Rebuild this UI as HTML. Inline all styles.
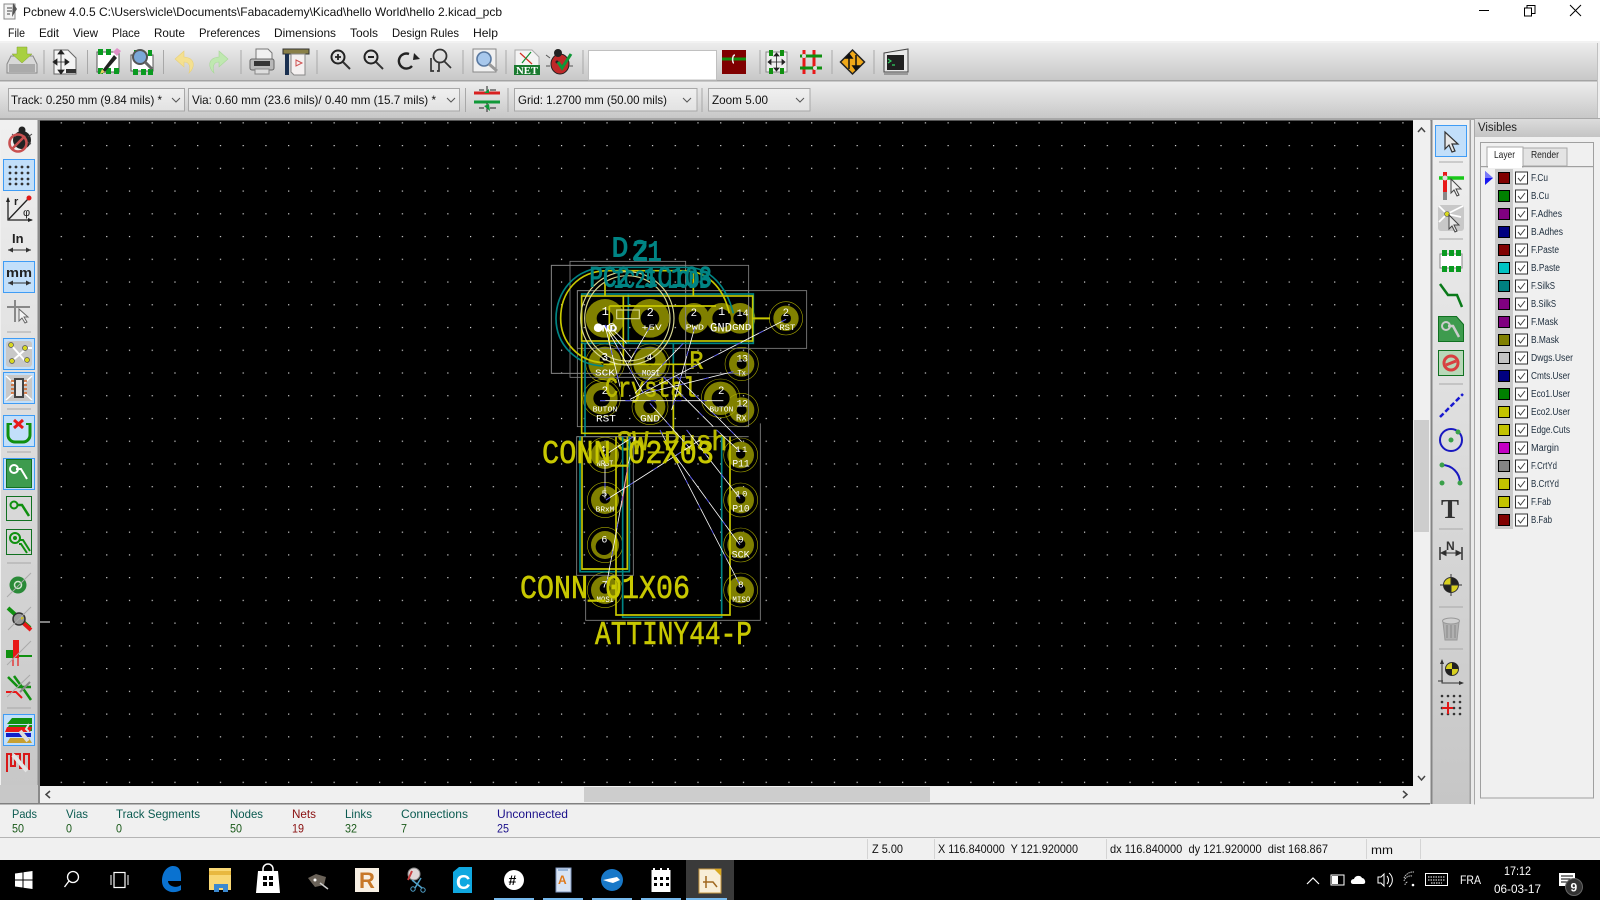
<!DOCTYPE html>
<html><head><meta charset="utf-8"><title>Pcbnew</title>
<style>
html,body{margin:0;padding:0;background:#f0f0f0;width:1600px;height:900px;overflow:hidden}
svg{display:block}
text{font-family:"Liberation Sans",sans-serif;font-size:12px;fill:#111}
.m text{font-size:12px}
.l{font-size:10px;fill:#1c2c3c;transform:translateY(-.5px)}
.pcb text{font-family:"Liberation Mono",monospace}
.tl text{stroke:#008484;stroke-width:3}
.yl text{stroke:#b8b800;stroke-width:2}
.big{font-size:33px;fill:#c8c800;stroke:#c8c800;stroke-width:.6}
.sep{stroke:#a8a8a8;stroke-width:1}
</style></head><body>
<svg width="1600" height="900" viewBox="0 0 1600 900" xmlns="http://www.w3.org/2000/svg">
<defs>
<linearGradient id="tb" x1="0" y1="0" x2="0" y2="1"><stop offset="0" stop-color="#ededed"/><stop offset="1" stop-color="#c8c8c8"/></linearGradient>
<linearGradient id="side" x1="0" y1="0" x2="0" y2="1"><stop offset="0" stop-color="#f0f0f0"/><stop offset="1" stop-color="#c6c6c6"/></linearGradient>
<linearGradient id="cap" x1="0" y1="0" x2="0" y2="1"><stop offset="0" stop-color="#dcdcdc"/><stop offset="1" stop-color="#c4c4c4"/></linearGradient>
<linearGradient id="combo" x1="0" y1="0" x2="0" y2="1"><stop offset="0" stop-color="#f0f0f0"/><stop offset="1" stop-color="#e2e2e2"/></linearGradient>
<pattern id="grid" width="22.74" height="22.74" patternUnits="userSpaceOnUse" patternTransform="translate(15.2 8.56)"><rect width="1.2" height="1.2" fill="#d8d8d8"/></pattern>
</defs>

<!-- window -->
<rect width="1600" height="900" fill="#f0f0f0"/>
<rect width="1600" height="41" fill="#fff"/>
<g>
<rect x="4" y="4" width="11" height="15" fill="#f4f4f4" stroke="#888"/><path d="M7 8h5M7 11h5M7 14h3" stroke="#444"/><path d="M13 3l4 6-5 8z" fill="#555"/>
</g>
<text x="23" y="16" textLength="479" lengthAdjust="spacingAndGlyphs">Pcbnew 4.0.5 C:\Users\vicle\Documents\Fabacademy\Kicad\hello World\hello 2.kicad_pcb</text>
<path d="M1479 10.5h10" stroke="#000"/>
<path d="M1524.5 8h7v8h-7zM1527 8V5.500h8v8h-3.500" fill="none" stroke="#000"/>
<path d="M1570 5l11 11M1581 5l-11 11" stroke="#000"/>

<g class="m">
<text x="8" y="37" textLength="17" lengthAdjust="spacingAndGlyphs">File</text>
<text x="39" y="37" textLength="20" lengthAdjust="spacingAndGlyphs">Edit</text>
<text x="73" y="37" textLength="25" lengthAdjust="spacingAndGlyphs">View</text>
<text x="112" y="37" textLength="28" lengthAdjust="spacingAndGlyphs">Place</text>
<text x="154" y="37" textLength="31" lengthAdjust="spacingAndGlyphs">Route</text>
<text x="199" y="37" textLength="61" lengthAdjust="spacingAndGlyphs">Preferences</text>
<text x="274" y="37" textLength="62" lengthAdjust="spacingAndGlyphs">Dimensions</text>
<text x="350" y="37" textLength="28" lengthAdjust="spacingAndGlyphs">Tools</text>
<text x="392" y="37" textLength="67" lengthAdjust="spacingAndGlyphs">Design Rules</text>
<text x="473" y="37" textLength="25" lengthAdjust="spacingAndGlyphs">Help</text>
</g>

<!-- toolbars -->
<rect y="41" width="1600" height="2" fill="#f2f2f2"/>
<rect y="43" width="1597" height="37" fill="url(#tb)"/>
<rect y="80" width="1597" height="1.500" fill="#a4a4a4"/>
<rect y="81.500" width="1597" height="36.500" fill="url(#tb)"/>
<rect y="118" width="1600" height="2.500" fill="#a8a8a8"/>
<rect x="1597" y="43" width="1" height="75" fill="#c0c0c0"/>
<g class="sep">
<path d="M44 50v24M87.500 50v24M163.500 50v24M241 50v24M317 50v24M463 50v24M506 50v24M583 50v24M760 50v24M832 50v24M874 50v24M465.500 88v24M508 88v24M702 88v24"/>
</g>

<!-- Toolbar 1 icons -->
<g>
<path d="M11 62h22l4 8v9H7v-9z" transform="translate(0 -6)" fill="#d8d8d8" stroke="#888"/><rect x="9" y="64" width="26" height="8" fill="#aaa"/><path d="M17 47h10v7h5l-10 9-10-9h5z" fill="#a8d040" stroke="#80a030" stroke-width=".5"/>
<path d="M54 50h14l8 8v16H54z" fill="#f4f4f4" stroke="#666"/><path d="M61 52v20M55 62h14M61 50l-3 4h6zM61 74l-3-4h6zM53 62l4-3v6zM69 62l-4-3v6z" fill="#222" stroke="#222" stroke-width=".8"/><path d="M66 69h10v4H66z" fill="#333"/>
<rect x="97" y="52" width="22" height="20" fill="#fff" stroke="#555"/><path d="M98 49h5v6h-5zM106 49h5v6h-5zM98 68h5v6h-5zM106 68h5v6h-5zM114 68h5v6h-5z" fill="#0a9a20"/><path d="M101 72l13-17 3 3-13 15z" fill="#222"/><path d="M113 52l4-4 4 3-4 5z" fill="#e090c8"/><path d="M100 74l2-5 3 3z" fill="#e8d060"/>
<rect x="131" y="55" width="22" height="16" fill="#fff" stroke="#555"/><path d="M133 69h5v6h-5zM141 69h5v6h-5zM148 69h5v6h-5zM134 50h4v6h-4zM148 50h4v6h-4z" fill="#0a9a20"/><circle cx="140" cy="57" r="7" fill="#7aa8d8" stroke="#555" stroke-width="2"/><path d="M145 62l7 7" stroke="#666" stroke-width="3"/>
<path d="M184 51l-9 8 9 8v-5c5 0 7 4 5 11 6-5 7-15-5-16z" fill="#f4e090" stroke="#e8d078" stroke-width=".6"/>
<path d="M219 51l9 8-9 8v-5c-5 0-7 4-5 11-6-5-7-15 5-16z" fill="#bfe8b0" stroke="#a8d898" stroke-width=".6"/>
<path d="M256 49h12l4 4v7h-16z" fill="#f0f0f0" stroke="#777"/><rect x="250" y="59" width="24" height="11" rx="2" fill="#b8b8b8" stroke="#666"/><rect x="254" y="61" width="16" height="5" fill="#333"/><rect x="255" y="69" width="14" height="5" fill="#ddd" stroke="#888"/>
<path d="M283 49h26v5h-26z" fill="#8a8048" stroke="#333"/><path d="M285 54h4v21h-4z" fill="#1a3050"/><path d="M291 54h14v21h-11l-3-3z" fill="#f4f0f0" stroke="#888"/><path d="M296 60l6 3-6 3z" fill="none" stroke="#d05050"/>
<circle cx="338" cy="57" r="6.500" fill="none" stroke="#222" stroke-width="2"/><path d="M335 57h6M338 54v6" stroke="#222" stroke-width="1.800"/><path d="M343 62l7 7" stroke="#333" stroke-width="2"/>
<circle cx="371" cy="57" r="6.500" fill="none" stroke="#222" stroke-width="2"/><path d="M368 57h6" stroke="#222" stroke-width="2"/><path d="M376 62l7 7" stroke="#333" stroke-width="2"/>
<path d="M412 66a7.500 7.500 0 1 1 -3 -12" fill="none" stroke="#222" stroke-width="2.400"/><path d="M407 53l6 6-7 1z" fill="#222" transform="translate(7 0)"/>
<circle cx="440" cy="56" r="6.500" fill="none" stroke="#333" stroke-width="1.800"/><path d="M444 61l7 7M431 58v13h3M439 62v9h-2" stroke="#333" stroke-width="1.700" fill="none"/>
<rect x="473" y="49" width="23" height="23" fill="#f0f0f0" stroke="#888"/><circle cx="484" cy="59" r="7" fill="#a8c8ec" stroke="#5878a0" stroke-width="1.600"/><path d="M489 64l8 7" stroke="#999" stroke-width="3"/>
<path d="M515 50h17l7 7v15h-24z" fill="#f4f4f4" stroke="#aaa"/><path d="M520 53l12 11" stroke="#d03020" stroke-width="1.200"/><path d="M531 52l-9 11" stroke="#109030" stroke-width="1.200"/><rect x="514" y="65" width="26" height="10" fill="#1a7a30"/><text x="516" y="74" textLength="22" lengthAdjust="spacingAndGlyphs" style="font-size:10px;font-weight:bold;fill:#fff;font-family:'Liberation Serif',serif">NET</text>
<ellipse cx="560" cy="64" rx="9" ry="10" fill="#c02828" stroke="#222"/><circle cx="558" cy="53" r="4" fill="#222"/><circle cx="557" cy="62" r="1.500" fill="#222"/><circle cx="563" cy="66" r="1.500" fill="#222"/><path d="M550 58l-4-3M550 66h-4M569 66h4" stroke="#555"/><path d="M558 62l4 6 9-14" fill="none" stroke="#109838" stroke-width="3"/>
<rect x="588.500" y="50.500" width="128" height="29.500" fill="#fff" stroke="#c0c0c0"/>
<rect x="722" y="50" width="24" height="24" fill="#800000"/><path d="M722 59h24" stroke="#109010" stroke-width="3"/><path d="M735 55c-3 0-3 8-1 8" stroke="#eee" fill="none" stroke-width="1.500"/>
<rect x="766" y="52" width="21" height="20" fill="#eee" stroke="#888"/><path d="M769 50h4v6h-4zM780 50h4v6h-4zM769 68h4v6h-4zM780 68h4v6h-4z" fill="#109010"/><path d="M768 62h17M776.500 53v18M768 62l3-2.500v5zM785 62l-3-2.500v5zM776.500 53l-2.500 3h5zM776.500 71l-2.500-3h5z" stroke="#222" fill="#222" stroke-width=".8"/>
<path d="M804 50v24M814 50v24" stroke="#e81818" stroke-width="3"/><path d="M800 56h22M800 68h22" stroke="#109010" stroke-width="3"/><circle cx="804" cy="56" r="2" fill="#ddd"/><circle cx="815" cy="68" r="2" fill="#ddd"/>
<path d="M852.500 50l12 12-12 12-12-12z" fill="#f0a818" stroke="#222" stroke-width="1.500"/><path d="M849 55v14M856 69V55M849 54l-3 4h6zM856 70l-3-4h6z" stroke="#111" fill="#111" stroke-width="1.500"/>
<path d="M884 53l24-4v23h-24z" fill="#e8e8e8" stroke="#444"/><rect x="887" y="55" width="17" height="15" fill="#202020"/><path d="M888 59l3 2-3 2M892 65h3" stroke="#30d060" fill="none" stroke-width="1.200"/><path d="M884 74h24" stroke="#888" stroke-width="1.500"/>
</g>

<!-- Toolbar 2 -->
<g>
<rect x="8.500" y="88.500" width="176" height="22.500" fill="url(#combo)" stroke="#a8a8a8"/>
<text x="11" y="104" textLength="151" lengthAdjust="spacingAndGlyphs">Track: 0.250 mm (9.84 mils) *</text>
<path d="M172 98l4 4 4-4" fill="none" stroke="#555"/>
<rect x="188.500" y="88.500" width="271" height="22.500" fill="url(#combo)" stroke="#a8a8a8"/>
<text x="192" y="104" textLength="244" lengthAdjust="spacingAndGlyphs">Via: 0.60 mm (23.6 mils)/ 0.40 mm (15.7 mils) *</text>
<path d="M447 98l4 4 4-4" fill="none" stroke="#555"/>
<path d="M474 93h26" stroke="#d82020" stroke-width="3"/><path d="M474 102h26" stroke="#109838" stroke-width="3"/><path d="M487 86v6M487 103v9M479 90h5M490 90h6M479 108h5M490 108h6" stroke="#222"/><path d="M484 93l5-4v4zM484 106l6 5-1-7z" fill="#109838"/>
<rect x="514.500" y="88.500" width="182.500" height="22.500" fill="url(#combo)" stroke="#a8a8a8"/>
<text x="518" y="104" textLength="149" lengthAdjust="spacingAndGlyphs">Grid: 1.2700 mm (50.00 mils)</text>
<path d="M683 98l4 4 4-4" fill="none" stroke="#555"/>
<rect x="708.500" y="88.500" width="101.500" height="22.500" fill="url(#combo)" stroke="#a8a8a8"/>
<text x="712" y="104" textLength="56" lengthAdjust="spacingAndGlyphs">Zoom 5.00</text>
<path d="M796 98l4 4 4-4" fill="none" stroke="#555"/>
</g>

<!-- Canvas -->
<rect x="40" y="120.500" width="1373" height="665.500" fill="#000"/>
<rect x="40" y="120.500" width="1373" height="665.500" fill="url(#grid)"/>
<path d="M40 622h10" stroke="#fff"/>

<!-- PCB top -->
<g class="pcb" transform="translate(520 230) scale(.33333)">
<g fill="#808000">
<circle cx="255" cy="400" r="50"/><circle cx="390" cy="400" r="50"/>
<circle cx="255" cy="265" r="58"/><circle cx="390" cy="265" r="58"/>
<circle cx="522" cy="265" r="46"/><circle cx="605" cy="265" r="46"/><circle cx="660" cy="265" r="46"/>
<circle cx="798" cy="265" r="38"/>
<circle cx="665" cy="402" r="38"/><circle cx="665" cy="540" r="38"/>
<circle cx="245" cy="505" r="48"/><circle cx="390" cy="530" r="46"/><circle cx="602" cy="505" r="50"/>
</g>
<g fill="none" stroke="#a8a800" stroke-width="1.800">
<circle cx="798" cy="265" r="50"/><circle cx="665" cy="402" r="50"/><circle cx="665" cy="540" r="50"/>
<circle cx="255" cy="400" r="58"/><circle cx="390" cy="400" r="58"/><circle cx="245" cy="505" r="56"/><circle cx="390" cy="530" r="54"/><circle cx="602" cy="505" r="58"/>
</g>
<g fill="#000">
<circle cx="255" cy="265" r="25"/><circle cx="390" cy="265" r="28"/><circle cx="522" cy="265" r="22"/><circle cx="605" cy="265" r="28"/><circle cx="660" cy="265" r="20"/><circle cx="798" cy="265" r="15"/>
<circle cx="255" cy="390" r="16"/><circle cx="390" cy="390" r="16"/><circle cx="665" cy="402" r="15"/><circle cx="665" cy="540" r="15"/>
<circle cx="245" cy="505" r="25"/><circle cx="390" cy="530" r="20"/><circle cx="602" cy="505" r="27"/>
</g>
<g fill="none" stroke="#848484" stroke-width="2.500">
<rect x="94" y="106" width="403" height="324"/>
<rect x="150" y="94" width="347" height="348"/>
<rect x="94" y="106" width="592" height="324"/>
<rect x="172" y="182" width="514" height="408"/>
<rect x="172" y="182" width="688" height="173"/>
<path d="M170 620h516"/>
</g>
<g fill="none" stroke="#008484" stroke-width="5">
<path d="M640 250C620 170 570 112 500 112H265C160 112 108 190 108 265C108 345 170 405 250 408"/>
<rect x="185" y="192" width="515" height="148"/>
<path d="M195 340V620M460 340V610M325 190V340"/>
</g>
<g fill="none" stroke="#c8c800" stroke-width="5">
<path d="M628 250C610 170 560 122 490 122H265C170 122 122 190 122 265C122 335 175 395 250 398"/>
<rect x="185" y="198" width="513" height="135"/>
<path d="M268 228H588M268 228V340"/>
<path d="M185 340V610H460V403"/>
<path d="M250 403H530M255 130V198M520 130V198M310 198V403"/>
<path d="M698 265H750" stroke-width="6"/>
</g>
<g fill="none" stroke="#d8d890" stroke-width="3.500">
<circle cx="322" cy="265" r="140"/><circle cx="322" cy="265" r="128"/>
<rect x="290" y="240" width="68" height="26"/>
</g>
<g class="tl">
<text x="275" y="80" textLength="50" lengthAdjust="spacingAndGlyphs" style="font-size:86px;fill:#008484">D</text>
<text x="335" y="88" textLength="50" lengthAdjust="spacingAndGlyphs" style="font-size:86px;fill:#008484">2</text>
<text x="340" y="92" textLength="85" lengthAdjust="spacingAndGlyphs" style="font-size:86px;fill:#008484">Z1</text>
<text x="208" y="170" textLength="368" lengthAdjust="spacingAndGlyphs" style="font-size:88px;fill:#008484">PC2 1C103</text>
<text x="280" y="172" textLength="290" lengthAdjust="spacingAndGlyphs" style="font-size:76px;fill:#008484">IC25 LCDB</text>
</g>
<g class="yl">
<text x="255" y="500" textLength="275" lengthAdjust="spacingAndGlyphs" style="font-size:84px;fill:#b8b800">Crystal</text>
<text x="508" y="415" textLength="42" lengthAdjust="spacingAndGlyphs" style="font-size:78px;fill:#b8b800">R</text>
<text x="290" y="660" textLength="332" lengthAdjust="spacingAndGlyphs" style="font-size:84px;fill:#b8b800">SW_Push</text>
</g>
<!-- ratsnest -->
<g fill="none">
<path id="r1" d="M798 268L330 508M255 285L335 385M255 285L300 470M255 285L370 490M270 290L320 340M390 290L325 400M525 290L455 540M490 340L345 490M640 425L375 490M240 512H610M390 520L510 655M430 440L580 590M470 440L690 660" stroke="#fff" stroke-width="2.400"/>
<path d="M798 268L330 508M255 285L335 385M255 285L300 470M255 285L370 490M270 290L320 340M390 290L325 400M525 290L455 540M490 340L345 490M640 425L375 490M240 512H610M390 520L510 655M430 440L580 590M470 440L690 660" stroke="#4848f0" stroke-width="2.400" stroke-dasharray="16 60"/>
</g>
<circle cx="235" cy="293" r="13" fill="#fff"/><circle cx="275" cy="292" r="11" fill="none" stroke="#fff" stroke-width="3"/>
<!-- pad text -->
<g>
<text x="245" y="255" style="font-size:36px;fill:#fff">1</text><text x="380" y="258" style="font-size:36px;fill:#fff">2</text><text x="512" y="258" style="font-size:32px;fill:#fff">2</text><text x="594" y="255" style="font-size:36px;fill:#fff">1</text>
<text x="650" y="258" textLength="36" style="font-size:30px;fill:#fff">14</text><text x="788" y="258" style="font-size:32px;fill:#fff">2</text>
<text x="220" y="305" textLength="72" lengthAdjust="spacingAndGlyphs" style="font-size:30px;fill:#fff;font-weight:bold">GND</text>
<text x="365" y="300" textLength="60" lengthAdjust="spacingAndGlyphs" style="font-size:26px;fill:#fff">+5V</text>
<text x="497" y="298" textLength="55" lengthAdjust="spacingAndGlyphs" style="font-size:22px;fill:#fff">PWD</text>
<text x="570" y="305" textLength="66" lengthAdjust="spacingAndGlyphs" style="font-size:38px;fill:#fff">GND</text>
<text x="636" y="300" textLength="58" lengthAdjust="spacingAndGlyphs" style="font-size:28px;fill:#fff">GND</text>
<text x="778" y="300" textLength="48" lengthAdjust="spacingAndGlyphs" style="font-size:26px;fill:#fff">RST</text>
<text x="245" y="392" style="font-size:32px;fill:#fff">3</text><text x="380" y="390" style="font-size:28px;fill:#fff">4</text>
<text x="225" y="437" textLength="60" lengthAdjust="spacingAndGlyphs" style="font-size:28px;fill:#fff">SCK</text>
<text x="366" y="437" textLength="54" lengthAdjust="spacingAndGlyphs" style="font-size:24px;fill:#fff">MOSI</text>
<text x="650" y="395" textLength="34" style="font-size:30px;fill:#fff">13</text><text x="652" y="436" textLength="26" lengthAdjust="spacingAndGlyphs" style="font-size:26px;fill:#fff">Tx</text>
<text x="245" y="492" style="font-size:32px;fill:#fff">2</text><text x="594" y="492" style="font-size:32px;fill:#fff">2</text>
<text x="218" y="544" textLength="74" lengthAdjust="spacingAndGlyphs" style="font-size:22px;fill:#fff">BUTON</text>
<text x="568" y="544" textLength="72" lengthAdjust="spacingAndGlyphs" style="font-size:22px;fill:#fff">BUTON</text>
<text x="228" y="574" textLength="60" lengthAdjust="spacingAndGlyphs" style="font-size:30px;fill:#fff">RST</text>
<text x="360" y="574" textLength="60" lengthAdjust="spacingAndGlyphs" style="font-size:30px;fill:#fff">GND</text>
<text x="650" y="530" textLength="34" style="font-size:30px;fill:#fff">12</text><text x="648" y="572" textLength="32" lengthAdjust="spacingAndGlyphs" style="font-size:28px;fill:#fff">Rx</text>
<text x="245" y="648" style="font-size:26px;fill:#fff">4</text><text x="650" y="660" textLength="34" style="font-size:26px;fill:#fff">11</text>
</g>
</g>

<!-- PCB lower -->
<g class="pcb" transform="translate(500 430) scale(.33333)">
<g fill="#808000">
<circle cx="315" cy="75" r="42"/><circle cx="315" cy="210" r="42"/><circle cx="315" cy="345" r="42"/><circle cx="315" cy="480" r="42"/>
<circle cx="722" cy="75" r="40"/><circle cx="722" cy="210" r="40"/><circle cx="722" cy="345" r="40"/><circle cx="722" cy="480" r="40"/>
</g>
<g fill="none" stroke="#a8a800" stroke-width="1.800">
<circle cx="315" cy="75" r="53"/><circle cx="315" cy="210" r="53"/><circle cx="315" cy="345" r="53"/><circle cx="315" cy="480" r="53"/>
<circle cx="722" cy="75" r="51"/><circle cx="722" cy="210" r="51"/><circle cx="722" cy="345" r="51"/><circle cx="722" cy="480" r="51"/>
</g>
<g fill="#000">
<circle cx="315" cy="70" r="16"/><circle cx="315" cy="205" r="16"/><circle cx="312" cy="350" r="25"/><circle cx="315" cy="475" r="16"/>
<circle cx="722" cy="72" r="14"/><circle cx="722" cy="207" r="14"/><circle cx="722" cy="342" r="14"/><circle cx="722" cy="477" r="14"/>
</g>
<g fill="none" stroke="#848484" stroke-width="2.500">
<path d="M230 20V436H400V20z"/>
<path d="M257 436V571H781V-20"/>
</g>
<g fill="none" stroke="#008484" stroke-width="5">
<path d="M240 20V425H388V20"/>
<path d="M368 20V562H665V20"/>
</g>
<g fill="none" stroke="#c8c800" stroke-width="5">
<path d="M246 20V417H382V20"/>
<path d="M348 20V555H690V20"/>
</g>
<g fill="none">
<path d="M315 75V205M315 75L400 20M318 210L600 30M320 460L350 300L385 100L405 20M650 0L720 65M480 0L720 465M520 70L720 345M560 0L720 205" stroke="#fff" stroke-width="2.400"/>
<path d="M315 75V205M315 75L400 20M318 210L600 30M320 460L350 300L385 100L405 20M650 0L720 65M480 0L720 465M520 70L720 345M560 0L720 205" stroke="#4848f0" stroke-width="2.400" stroke-dasharray="14 70"/>
<path d="M385 100L365 230" stroke="#e07070" stroke-width="2.400"/>
</g>
<g>
<text x="300" y="66" textLength="26" style="font-size:28px;fill:#fff">4</text>
<text x="290" y="108" textLength="50" lengthAdjust="spacingAndGlyphs" style="font-size:24px;fill:#fff">NRST</text>
<text x="305" y="200" style="font-size:28px;fill:#fff">5</text>
<text x="287" y="244" textLength="56" lengthAdjust="spacingAndGlyphs" style="font-size:22px;fill:#fff">BRxM</text>
<text x="304" y="338" style="font-size:30px;fill:#fff">6</text>
<text x="305" y="472" style="font-size:30px;fill:#fff">7</text>
<text x="290" y="516" textLength="52" lengthAdjust="spacingAndGlyphs" style="font-size:24px;fill:#fff">MOSI</text>
<text x="706" y="66" textLength="36" style="font-size:26px;fill:#fff">11</text>
<text x="697" y="110" textLength="52" lengthAdjust="spacingAndGlyphs" style="font-size:30px;fill:#fff">P11</text>
<text x="706" y="200" textLength="36" style="font-size:26px;fill:#fff">10</text>
<text x="697" y="245" textLength="52" lengthAdjust="spacingAndGlyphs" style="font-size:30px;fill:#fff">P10</text>
<text x="714" y="338" style="font-size:28px;fill:#fff">9</text>
<text x="695" y="383" textLength="54" lengthAdjust="spacingAndGlyphs" style="font-size:30px;fill:#fff">SCK</text>
<text x="714" y="472" style="font-size:28px;fill:#fff">8</text>
<text x="697" y="516" textLength="54" lengthAdjust="spacingAndGlyphs" style="font-size:24px;fill:#fff">MISO</text>
</g>
</g>

<!-- big yellow refs -->
<g class="pcb">
<text class="big" x="542" y="463" textLength="172" lengthAdjust="spacingAndGlyphs">CONN_02X03</text>
<text class="big" x="520" y="598" textLength="170" lengthAdjust="spacingAndGlyphs">CONN_01X06</text>
<text class="big" x="595" y="644" textLength="157" lengthAdjust="spacingAndGlyphs">ATTINY44-P</text>
</g>

<!-- Left toolbar -->
<rect x="0" y="120" width="2" height="668" fill="#f0f0f0"/>
<rect x="1" y="120" width="37" height="683" fill="url(#side)"/>
<rect x="37.500" y="120" width="2.500" height="683" fill="#8a8a8a"/>
<g fill="#c2dffa" stroke="#3f9cf5" stroke-width="1">
<rect x="3.500" y="159.500" width="31" height="31"/>
<rect x="3.500" y="261.500" width="31" height="31"/>
<rect x="3.500" y="338.500" width="31" height="31"/>
<rect x="3.500" y="372.500" width="31" height="31"/>
<rect x="3.500" y="415.500" width="31" height="31"/>
<rect x="3.500" y="458.500" width="31" height="31"/>
<rect x="3.500" y="714.500" width="31" height="31"/>
</g>
<g class="sep"><path d="M7 332h24M7 409h24M7 452h24M7 563h24M7 708h24M7 786h24"/></g>
<g>
<ellipse cx="22" cy="140" rx="9" ry="9" fill="#222"/><circle cx="22" cy="130" r="3.500" fill="#222"/><path d="M12 134l4 3M32 134l-4 3M31 144l-4-2" stroke="#444"/>
<circle cx="18" cy="143" r="8.500" fill="none" stroke="#c85050" stroke-width="2.600"/><path d="M12 149l13-13" stroke="#c85050" stroke-width="2.600"/>
<g fill="#333"><circle cx="10" cy="167" r="1.400"/><circle cx="16" cy="167" r="1.400"/><circle cx="22" cy="167" r="1.400"/><circle cx="28" cy="167" r="1.400"/><circle cx="10" cy="173" r="1.400"/><circle cx="16" cy="173" r="1.400"/><circle cx="22" cy="173" r="1.400"/><circle cx="28" cy="173" r="1.400"/><circle cx="10" cy="179" r="1.400"/><circle cx="16" cy="179" r="1.400"/><circle cx="22" cy="179" r="1.400"/><circle cx="28" cy="179" r="1.400"/><circle cx="10" cy="184" r="1.400"/><circle cx="16" cy="184" r="1.400"/><circle cx="22" cy="184" r="1.400"/><circle cx="28" cy="184" r="1.400"/></g>
<path d="M8 198v22h24M9 219l19-20" fill="none" stroke="#222" stroke-width="1.300"/><path d="M8 197l-2 5h4zM33 220l-5-2v4z" fill="#222"/><circle cx="29" cy="198" r="2.500" fill="#e01818"/><text x="14" y="205" style="font-size:11px;font-weight:bold;fill:#222">r</text><text x="23" y="216" style="font-size:11px;fill:#222">φ</text>
<text x="12" y="243" style="font-size:13px;font-weight:bold;fill:#222">In</text><path d="M8 250h23" stroke="#333"/><path d="M8 250l5-2.500v5zM31 250l-5-2.500v5z" fill="#333"/>
<text x="6" y="277" textLength="26" lengthAdjust="spacingAndGlyphs" style="font-size:13px;font-weight:bold;fill:#222">mm</text><path d="M8 283h23" stroke="#333"/><path d="M8 283l5-2.500v5zM31 283l-5-2.500v5z" fill="#333"/>
<path d="M15 300v22M7 307h23" stroke="#888" stroke-width="2"/><path d="M19 309v12l3-3 3 5 2-1-3-5h4z" fill="#f4f4f4" stroke="#666"/>
<rect x="6" y="341" width="26" height="26" rx="3" fill="#c8c8c8"/><path d="M11 345L27 363M27 348L12 361M28 348H32" stroke="#fff" stroke-width="2"/><g fill="#d8d820" stroke="#555" stroke-width=".7"><circle cx="11" cy="345" r="2.500"/><circle cx="25" cy="348" r="2.500"/><circle cx="12" cy="361" r="2.500"/><circle cx="27" cy="360" r="2.500"/></g>
<rect x="6" y="375" width="26" height="26" fill="#c8c8c8"/><path d="M6 376l26 24M32 376l-26 24" stroke="#fff" stroke-width="1.500"/><rect x="14" y="378" width="10" height="20" fill="#444"/><rect x="16" y="380" width="6" height="16" fill="#e8e8e8"/><path d="M11 381h3M11 385h3M11 389h3M11 393h3M24 381h3M24 385h3M24 389h3M24 393h3" stroke="#d06020" stroke-width="1.600"/>
<path d="M8 423v12a7 7 0 0 0 7 7h8a7 7 0 0 0 7-7v-12" fill="none" stroke="#109010" stroke-width="3"/><path d="M7 424h5M26 424h5" stroke="#109010" stroke-width="2"/><path d="M14 420l9 8M23 420l-9 8" stroke="#e81818" stroke-width="3"/>
<rect x="6.500" y="459.500" width="25" height="28" fill="#3e9b4e" stroke="#107020"/><circle cx="14" cy="469" r="4" fill="none" stroke="#fff" stroke-width="2"/><path d="M16 469h5l6 10" fill="none" stroke="#fff" stroke-width="2"/>
<rect x="6.500" y="496.500" width="25" height="24" fill="none" stroke="#107020"/><circle cx="14" cy="505" r="3.500" fill="none" stroke="#109010" stroke-width="2"/><path d="M17 505h5l7 11" fill="none" stroke="#109010" stroke-width="2.500"/>
<rect x="6.500" y="529.500" width="25" height="25" fill="none" stroke="#107020"/><circle cx="15" cy="538" r="5" fill="none" stroke="#109010" stroke-width="2"/><circle cx="15" cy="538" r="2" fill="#109010"/><path d="M19 540h4l7 11M19 544h2l6 9" fill="none" stroke="#109010" stroke-width="2"/>
<circle cx="18" cy="585" r="8.500" fill="#2a8a38"/><circle cx="18" cy="585" r="3.500" fill="none" stroke="#d0e8d0" stroke-width="1.500"/><path d="M7 597L31 573" stroke="#aaa"/>
<path d="M8 608L30 628" stroke="#109010" stroke-width="4"/><path d="M20 620L31 630" stroke="#e81818" stroke-width="4"/><circle cx="19" cy="619" r="6" fill="#999" stroke="#333" stroke-width="1.500"/><path d="M21 616l3 2-3 2" fill="#d0c020"/><path d="M8 630L31 607" stroke="#aaa"/>
<path d="M6 656h26" stroke="#109010" stroke-width="2"/><path d="M13 640h6v18h-6z" fill="#e81818"/><path d="M6 650h7v8H6z" fill="#109010"/><path d="M13 658v8M18 658v8" stroke="#e81818" stroke-width="1.200"/><path d="M7 665L31 641" stroke="#aaa"/>
<path d="M8 677l10 10 13 0M14 676l8 11 9 13" fill="none" stroke="#109010" stroke-width="2.500"/><path d="M6 692h10l6 6" fill="none" stroke="#e81818" stroke-width="2"/><path d="M20 692l10-10" stroke="#888" stroke-width="2"/><path d="M7 697L30 675" stroke="#aaa"/>
<path d="M7 724l5-6h20v6zM6 731l3-6h23v6z" fill="#109010"/><path d="M7 727h25l-2 5H5z" fill="#e81818"/><path d="M6 733h25v4H6z" fill="#1020c8"/><path d="M10 738h19l3 5H7z" fill="#c8a030"/><path d="M20 731l8 10" stroke="#ddd" stroke-width="4"/><path d="M29 724l-3 5 3 3" stroke="#ddd" stroke-width="2" fill="none"/>
<path d="M7 772V754h4v12h4V754h5v14h4V754h5v16" fill="none" stroke="#d81818" stroke-width="2"/><path d="M13 755l14 16" stroke="#e4e4e4" stroke-width="4"/>
</g>

<!-- Scrollbars -->
<rect x="1413" y="120" width="17" height="683" fill="#f0f0f0"/>
<rect x="1414" y="420" width="15" height="112" fill="#cdcdcd"/>
<path d="M1418 132l3.500-4 3.500 4" fill="none" stroke="#444" stroke-width="1.500"/>
<path d="M1418 776l3.500 4 3.500-4" fill="none" stroke="#444" stroke-width="1.500"/>
<rect x="40" y="786" width="1373" height="17" fill="#f0f0f0"/>
<rect x="584" y="787" width="346" height="15" fill="#cdcdcd"/>
<path d="M50 791l-4 3.500 4 3.500" fill="none" stroke="#444" stroke-width="1.500"/>
<path d="M1403 791l4 3.500-4 3.500" fill="none" stroke="#444" stroke-width="1.500"/>
<rect x="0" y="803" width="1430" height="1.500" fill="#808080"/>
<rect x="0" y="785" width="38" height="18" fill="#c8c8c8"/>

<!-- Right toolbar -->
<rect x="1430.500" y="120" width="2" height="684" fill="#858585"/>
<rect x="1432.500" y="120" width="37" height="684" fill="url(#side)"/>
<rect x="1469.500" y="120" width="1.500" height="684" fill="#a0a0a0"/>
<rect x="1471" y="120" width="129" height="684" fill="#eaeaea"/>
<rect x="1435.500" y="125.500" width="31" height="31" fill="#c2dffa" stroke="#3f9cf5"/>
<g class="sep"><path d="M1439 162h24M1439 239h24M1439 384h24M1439 529h24M1439 607h24M1439 649h24"/></g>
<g>
<path d="M1445 132v17l4-4 3 7 3-1-3-7h6z" fill="#e8e8e8" stroke="#333" stroke-width="1.200"/>
<path d="M1445 172v21" stroke="#e81818" stroke-width="4"/><path d="M1439 178h25" stroke="#18c818" stroke-width="3.500"/><path d="M1445 192v8" stroke="#888" stroke-width="4"/><circle cx="1445" cy="178" r="2.500" fill="#ddd"/><path d="M1451 179v14l3-3 3 6 2-1-3-6h5z" fill="#f0f0f0" stroke="#444"/>
<rect x="1438" y="205" width="26" height="26" rx="3" fill="#c8c8c8"/><path d="M1447 214l16-8M1447 214l14 3M1447 214l-8-8M1447 214l-8 8" stroke="#fff" stroke-width="1.800"/><circle cx="1447" cy="214" r="2.500" fill="#d8d820" stroke="#555" stroke-width=".6"/><path d="M1449 215v14l3-3 3 6 2-1-3-6h5z" fill="#e8e8e8" stroke="#444"/>
<rect x="1440" y="254" width="22" height="14" fill="#fff" stroke="#888"/><path d="M1442 250h5v6h-5zM1449 250h5v6h-5zM1456 250h5v6h-5zM1442 266h5v6h-5zM1449 266h5v6h-5zM1456 266h5v6h-5z" fill="#0a9a20"/>
<path d="M1440 284l8 11h9l5 12" fill="none" stroke="#0a7a1a" stroke-width="2.500"/>
<path d="M1438.500 316.500h18l7 8v17h-25z" fill="#3e9b4e" stroke="#107020"/><circle cx="1446" cy="326" r="4" fill="none" stroke="#ccc" stroke-width="2"/><path d="M1448 326h5l6 11" fill="none" stroke="#ccc" stroke-width="2.500"/>
<rect x="1438.500" y="350.500" width="25" height="25" fill="#b8d8b8" stroke="#107020"/><circle cx="1451" cy="363" r="7" fill="none" stroke="#d84040" stroke-width="3"/><path d="M1446 365l10-4" stroke="#d84040" stroke-width="3"/>
<path d="M1440 417l23-23" stroke="#1818d0" stroke-width="2.500" stroke-dasharray="5 2.500"/>
<circle cx="1451" cy="440" r="11" fill="none" stroke="#1818c0" stroke-width="2"/><circle cx="1451" cy="440" r="2.500" fill="#3aa04a"/><circle cx="1458" cy="432" r="2.500" fill="#3aa04a"/>
<path d="M1442 465c10 0 18 8 18 18" fill="none" stroke="#1818c0" stroke-width="2"/><circle cx="1442" cy="465" r="2.500" fill="#3aa04a"/><circle cx="1442" cy="483" r="2.500" fill="#3aa04a"/><circle cx="1460" cy="483" r="2.500" fill="#3aa04a"/>
<text x="1441" y="518" style="font-family:'Liberation Serif',serif;font-size:27px;font-weight:bold;fill:#333">T</text>
<text x="1446" y="550" style="font-size:12px;font-weight:bold;fill:#333">N</text><path d="M1440 547v13M1462 547v13" stroke="#333" stroke-width="1.500"/><path d="M1441 553h20M1441 553l5-2.500v5zM1461 553l-5-2.500v5z" stroke="#333" fill="#222"/>
<circle cx="1451" cy="585" r="7.500" fill="#d8d020" stroke="#333"/><path d="M1451 577.500a7.500 7.500 0 0 1 7.500 7.500h-7.500zM1451 592.500a7.500 7.500 0 0 1-7.500-7.500h7.500z" fill="#222"/><path d="M1451 574v22M1440 585h22" stroke="#333"/>
<path d="M1443 622h16l-2 18h-12z" fill="#b0b0b0" stroke="#999"/><ellipse cx="1451" cy="621" rx="8.500" ry="3" fill="#d0d0d0" stroke="#999"/><path d="M1447 625v13M1451 625v13M1455 625v13" stroke="#888"/>
<path d="M1442 662v21h21M1438 681h5" fill="none" stroke="#333"/><path d="M1442 659l-2 5h4zM1464 683l-5-2v4z" fill="#333"/><circle cx="1452" cy="669" r="6.500" fill="#d8d020" stroke="#333"/><path d="M1452 662.500a6.500 6.500 0 0 1 6.500 6.500h-6.500zM1452 675.500a6.500 6.500 0 0 1-6.500-6.500h6.500z" fill="#222"/>
<g fill="#333"><circle cx="1442" cy="696" r="1.300"/><circle cx="1448" cy="696" r="1.300"/><circle cx="1454" cy="696" r="1.300"/><circle cx="1460" cy="696" r="1.300"/><circle cx="1442" cy="702" r="1.300"/><circle cx="1454" cy="702" r="1.300"/><circle cx="1460" cy="702" r="1.300"/><circle cx="1442" cy="708" r="1.300"/><circle cx="1454" cy="708" r="1.300"/><circle cx="1460" cy="708" r="1.300"/><circle cx="1442" cy="714" r="1.300"/><circle cx="1448" cy="714" r="1.300"/><circle cx="1454" cy="714" r="1.300"/><circle cx="1460" cy="714" r="1.300"/></g><path d="M1442 708h11M1448 702v12" stroke="#e01818" stroke-width="2"/>
</g>

<!-- Visibles panel -->
<rect x="1474" y="119" width="126" height="18" fill="url(#cap)"/>
<rect x="1474" y="137" width="126" height="668" fill="#f0f0f0"/>
<rect x="1474" y="119" width="1" height="686" fill="#a8a8a8"/>
<text x="1478" y="131" textLength="39" lengthAdjust="spacingAndGlyphs" style="font-size:11.500px;fill:#222">Visibles</text>
<rect x="1480.500" y="142.500" width="113" height="655.500" fill="#f0f0f0" stroke="#a0a0a0"/>
<rect x="1523" y="148" width="44" height="18" fill="#e4e4e4" stroke="#a8a8a8"/>
<rect x="1487" y="147" width="36" height="20" fill="#fff" stroke="#a8a8a8"/>
<rect x="1481" y="166" width="112" height="1.200" fill="#a0a0a0"/>
<rect x="1488" y="165" width="34" height="3" fill="#fff"/>
<text x="1494" y="158" textLength="21" lengthAdjust="spacingAndGlyphs" style="font-size:10.500px;fill:#222">Layer</text>
<text x="1531" y="158" textLength="28" lengthAdjust="spacingAndGlyphs" style="font-size:10.500px;fill:#222">Render</text>
<path d="M1485 171l8 7-8 7z" fill="#1818f0"/><path d="M1485 171l8 7h-8z" fill="#7878f8"/>

<g id="layers">
<g transform="translate(0 178)"><rect x="1495" y="-9" width="18" height="18" fill="#c8c8c8"/><rect x="1498.500" y="-5.500" width="11" height="11" fill="#800000" stroke="#000"/><rect x="1515.500" y="-6" width="12" height="12" fill="#fff" stroke="#333"/><path d="M1518 0l2.500 3 4.500-6" fill="none" stroke="#444"/><text class="l" x="1531" y="3.500" textLength="17" lengthAdjust="spacingAndGlyphs">F.Cu</text></g>
<g transform="translate(0 196)"><rect x="1495" y="-9" width="18" height="18" fill="#c8c8c8"/><rect x="1498.500" y="-5.500" width="11" height="11" fill="#008000" stroke="#000"/><rect x="1515.500" y="-6" width="12" height="12" fill="#fff" stroke="#333"/><path d="M1518 0l2.500 3 4.500-6" fill="none" stroke="#444"/><text class="l" x="1531" y="3.500" textLength="18" lengthAdjust="spacingAndGlyphs">B.Cu</text></g>
<g transform="translate(0 214)"><rect x="1495" y="-9" width="18" height="18" fill="#c8c8c8"/><rect x="1498.500" y="-5.500" width="11" height="11" fill="#800080" stroke="#000"/><rect x="1515.500" y="-6" width="12" height="12" fill="#fff" stroke="#333"/><path d="M1518 0l2.500 3 4.500-6" fill="none" stroke="#444"/><text class="l" x="1531" y="3.500" textLength="31" lengthAdjust="spacingAndGlyphs">F.Adhes</text></g>
<g transform="translate(0 232)"><rect x="1495" y="-9" width="18" height="18" fill="#c8c8c8"/><rect x="1498.500" y="-5.500" width="11" height="11" fill="#000080" stroke="#000"/><rect x="1515.500" y="-6" width="12" height="12" fill="#fff" stroke="#333"/><path d="M1518 0l2.500 3 4.500-6" fill="none" stroke="#444"/><text class="l" x="1531" y="3.500" textLength="32" lengthAdjust="spacingAndGlyphs">B.Adhes</text></g>
<g transform="translate(0 250)"><rect x="1495" y="-9" width="18" height="18" fill="#c8c8c8"/><rect x="1498.500" y="-5.500" width="11" height="11" fill="#800000" stroke="#000"/><rect x="1515.500" y="-6" width="12" height="12" fill="#fff" stroke="#333"/><path d="M1518 0l2.500 3 4.500-6" fill="none" stroke="#444"/><text class="l" x="1531" y="3.500" textLength="28" lengthAdjust="spacingAndGlyphs">F.Paste</text></g>
<g transform="translate(0 268)"><rect x="1495" y="-9" width="18" height="18" fill="#c8c8c8"/><rect x="1498.500" y="-5.500" width="11" height="11" fill="#00c2c2" stroke="#000"/><rect x="1515.500" y="-6" width="12" height="12" fill="#fff" stroke="#333"/><path d="M1518 0l2.500 3 4.500-6" fill="none" stroke="#444"/><text class="l" x="1531" y="3.500" textLength="29" lengthAdjust="spacingAndGlyphs">B.Paste</text></g>
<g transform="translate(0 286)"><rect x="1495" y="-9" width="18" height="18" fill="#c8c8c8"/><rect x="1498.500" y="-5.500" width="11" height="11" fill="#008080" stroke="#000"/><rect x="1515.500" y="-6" width="12" height="12" fill="#fff" stroke="#333"/><path d="M1518 0l2.500 3 4.500-6" fill="none" stroke="#444"/><text class="l" x="1531" y="3.500" textLength="24" lengthAdjust="spacingAndGlyphs">F.SilkS</text></g>
<g transform="translate(0 304)"><rect x="1495" y="-9" width="18" height="18" fill="#c8c8c8"/><rect x="1498.500" y="-5.500" width="11" height="11" fill="#800080" stroke="#000"/><rect x="1515.500" y="-6" width="12" height="12" fill="#fff" stroke="#333"/><path d="M1518 0l2.500 3 4.500-6" fill="none" stroke="#444"/><text class="l" x="1531" y="3.500" textLength="25" lengthAdjust="spacingAndGlyphs">B.SilkS</text></g>
<g transform="translate(0 322)"><rect x="1495" y="-9" width="18" height="18" fill="#c8c8c8"/><rect x="1498.500" y="-5.500" width="11" height="11" fill="#800080" stroke="#000"/><rect x="1515.500" y="-6" width="12" height="12" fill="#fff" stroke="#333"/><path d="M1518 0l2.500 3 4.500-6" fill="none" stroke="#444"/><text class="l" x="1531" y="3.500" textLength="27" lengthAdjust="spacingAndGlyphs">F.Mask</text></g>
<g transform="translate(0 340)"><rect x="1495" y="-9" width="18" height="18" fill="#c8c8c8"/><rect x="1498.500" y="-5.500" width="11" height="11" fill="#808000" stroke="#000"/><rect x="1515.500" y="-6" width="12" height="12" fill="#fff" stroke="#333"/><path d="M1518 0l2.500 3 4.500-6" fill="none" stroke="#444"/><text class="l" x="1531" y="3.500" textLength="28" lengthAdjust="spacingAndGlyphs">B.Mask</text></g>
<g transform="translate(0 358)"><rect x="1495" y="-9" width="18" height="18" fill="#c8c8c8"/><rect x="1498.500" y="-5.500" width="11" height="11" fill="#c2c2c2" stroke="#000"/><rect x="1515.500" y="-6" width="12" height="12" fill="#fff" stroke="#333"/><path d="M1518 0l2.500 3 4.500-6" fill="none" stroke="#444"/><text class="l" x="1531" y="3.500" textLength="42" lengthAdjust="spacingAndGlyphs">Dwgs.User</text></g>
<g transform="translate(0 376)"><rect x="1495" y="-9" width="18" height="18" fill="#c8c8c8"/><rect x="1498.500" y="-5.500" width="11" height="11" fill="#000080" stroke="#000"/><rect x="1515.500" y="-6" width="12" height="12" fill="#fff" stroke="#333"/><path d="M1518 0l2.500 3 4.500-6" fill="none" stroke="#444"/><text class="l" x="1531" y="3.500" textLength="39" lengthAdjust="spacingAndGlyphs">Cmts.User</text></g>
<g transform="translate(0 394)"><rect x="1495" y="-9" width="18" height="18" fill="#c8c8c8"/><rect x="1498.500" y="-5.500" width="11" height="11" fill="#008000" stroke="#000"/><rect x="1515.500" y="-6" width="12" height="12" fill="#fff" stroke="#333"/><path d="M1518 0l2.500 3 4.500-6" fill="none" stroke="#444"/><text class="l" x="1531" y="3.500" textLength="39" lengthAdjust="spacingAndGlyphs">Eco1.User</text></g>
<g transform="translate(0 412)"><rect x="1495" y="-9" width="18" height="18" fill="#c8c8c8"/><rect x="1498.500" y="-5.500" width="11" height="11" fill="#c2c200" stroke="#000"/><rect x="1515.500" y="-6" width="12" height="12" fill="#fff" stroke="#333"/><path d="M1518 0l2.500 3 4.500-6" fill="none" stroke="#444"/><text class="l" x="1531" y="3.500" textLength="39" lengthAdjust="spacingAndGlyphs">Eco2.User</text></g>
<g transform="translate(0 430)"><rect x="1495" y="-9" width="18" height="18" fill="#c8c8c8"/><rect x="1498.500" y="-5.500" width="11" height="11" fill="#c2c200" stroke="#000"/><rect x="1515.500" y="-6" width="12" height="12" fill="#fff" stroke="#333"/><path d="M1518 0l2.500 3 4.500-6" fill="none" stroke="#444"/><text class="l" x="1531" y="3.500" textLength="39" lengthAdjust="spacingAndGlyphs">Edge.Cuts</text></g>
<g transform="translate(0 448)"><rect x="1495" y="-9" width="18" height="18" fill="#c8c8c8"/><rect x="1498.500" y="-5.500" width="11" height="11" fill="#c200c2" stroke="#000"/><rect x="1515.500" y="-6" width="12" height="12" fill="#fff" stroke="#333"/><path d="M1518 0l2.500 3 4.500-6" fill="none" stroke="#444"/><text class="l" x="1531" y="3.500" textLength="28" lengthAdjust="spacingAndGlyphs">Margin</text></g>
<g transform="translate(0 466)"><rect x="1495" y="-9" width="18" height="18" fill="#c8c8c8"/><rect x="1498.500" y="-5.500" width="11" height="11" fill="#848484" stroke="#000"/><rect x="1515.500" y="-6" width="12" height="12" fill="#fff" stroke="#333"/><path d="M1518 0l2.500 3 4.500-6" fill="none" stroke="#444"/><text class="l" x="1531" y="3.500" textLength="26" lengthAdjust="spacingAndGlyphs">F.CrtYd</text></g>
<g transform="translate(0 484)"><rect x="1495" y="-9" width="18" height="18" fill="#c8c8c8"/><rect x="1498.500" y="-5.500" width="11" height="11" fill="#c2c200" stroke="#000"/><rect x="1515.500" y="-6" width="12" height="12" fill="#fff" stroke="#333"/><path d="M1518 0l2.500 3 4.500-6" fill="none" stroke="#444"/><text class="l" x="1531" y="3.500" textLength="28" lengthAdjust="spacingAndGlyphs">B.CrtYd</text></g>
<g transform="translate(0 502)"><rect x="1495" y="-9" width="18" height="18" fill="#c8c8c8"/><rect x="1498.500" y="-5.500" width="11" height="11" fill="#c2c200" stroke="#000"/><rect x="1515.500" y="-6" width="12" height="12" fill="#fff" stroke="#333"/><path d="M1518 0l2.500 3 4.500-6" fill="none" stroke="#444"/><text class="l" x="1531" y="3.500" textLength="20" lengthAdjust="spacingAndGlyphs">F.Fab</text></g>
<g transform="translate(0 520)"><rect x="1495" y="-9" width="18" height="18" fill="#c8c8c8"/><rect x="1498.500" y="-5.500" width="11" height="11" fill="#800000" stroke="#000"/><rect x="1515.500" y="-6" width="12" height="12" fill="#fff" stroke="#333"/><path d="M1518 0l2.500 3 4.500-6" fill="none" stroke="#444"/><text class="l" x="1531" y="3.500" textLength="21" lengthAdjust="spacingAndGlyphs">B.Fab</text></g>
</g>

<!-- message panel -->
<rect x="0" y="804.500" width="1600" height="32.500" fill="#f0f0f0"/>
<rect x="0" y="837" width="1600" height="1" fill="#b4b4b4"/>
<g>
<text x="12" y="818" textLength="25" lengthAdjust="spacingAndGlyphs" style="fill:#0a5a50">Pads</text><text x="12" y="832.500" textLength="12" lengthAdjust="spacingAndGlyphs" style="fill:#1a5a1a">50</text>
<text x="66" y="818" textLength="22" lengthAdjust="spacingAndGlyphs" style="fill:#0a5a50">Vias</text><text x="66" y="832.500" textLength="6" lengthAdjust="spacingAndGlyphs" style="fill:#1a5a1a">0</text>
<text x="116" y="818" textLength="84" lengthAdjust="spacingAndGlyphs" style="fill:#0a5a50">Track Segments</text><text x="116" y="832.500" textLength="6" lengthAdjust="spacingAndGlyphs" style="fill:#1a5a1a">0</text>
<text x="230" y="818" textLength="33" lengthAdjust="spacingAndGlyphs" style="fill:#0a5a50">Nodes</text><text x="230" y="832.500" textLength="12" lengthAdjust="spacingAndGlyphs" style="fill:#1a5a1a">50</text>
<text x="292" y="818" textLength="24" lengthAdjust="spacingAndGlyphs" style="fill:#8a1010">Nets</text><text x="292" y="832.500" textLength="12" lengthAdjust="spacingAndGlyphs" style="fill:#8a1010">19</text>
<text x="345" y="818" textLength="27" lengthAdjust="spacingAndGlyphs" style="fill:#0a5a50">Links</text><text x="345" y="832.500" textLength="12" lengthAdjust="spacingAndGlyphs" style="fill:#1a5a1a">32</text>
<text x="401" y="818" textLength="67" lengthAdjust="spacingAndGlyphs" style="fill:#0a5a50">Connections</text><text x="401" y="832.500" textLength="6" lengthAdjust="spacingAndGlyphs" style="fill:#1a5a1a">7</text>
<text x="497" y="818" textLength="71" lengthAdjust="spacingAndGlyphs" style="fill:#1a108a">Unconnected</text><text x="497" y="832.500" textLength="12" lengthAdjust="spacingAndGlyphs" style="fill:#1a108a">25</text>
</g>

<!-- status bar -->
<rect x="0" y="838" width="1600" height="22" fill="#f0f0f0"/>
<path d="M867.500 839v20M934.500 839v20M1106.500 839v20M1366.500 839v20M1420.500 839v20" stroke="#d4d4d4"/>
<text x="872" y="853" textLength="31" lengthAdjust="spacingAndGlyphs">Z 5.00</text>
<text x="938" y="853" textLength="140" lengthAdjust="spacingAndGlyphs" xml:space="preserve">X 116.840000  Y 121.920000</text>
<text x="1110" y="853" textLength="218" lengthAdjust="spacingAndGlyphs" xml:space="preserve">dx 116.840000  dy 121.920000  dist 168.867</text>
<text x="1371" y="854" textLength="22" lengthAdjust="spacingAndGlyphs">mm</text>

<!-- taskbar -->
<rect x="0" y="860" width="1600" height="40" fill="#000"/>
<rect x="686" y="860" width="48" height="40" fill="#3a3a3a"/>
<g fill="#76b9ed"><rect x="494" y="898" width="40" height="2"/><rect x="543" y="898" width="40" height="2"/><rect x="592" y="898" width="40" height="2"/><rect x="641" y="898" width="40" height="2"/><rect x="686" y="898" width="41" height="2"/></g>
<path d="M15 873.500l7.500-1v7h-7.500zM23.500 872.300l9-1.300v8.500h-9zM15 880.500h7.500v7l-7.500-1zM23.500 880.500h9V889l-9-1.300z" fill="#fff"/>
<circle cx="73" cy="877" r="5.500" fill="none" stroke="#fff" stroke-width="1.300"/><path d="M69 881l-4.500 6" stroke="#fff" stroke-width="1.300"/>
<rect x="114" y="872.500" width="11" height="15" fill="none" stroke="#fff" stroke-width="1.200"/><path d="M111 875v10M128 875v10" stroke="#fff"/>
<path d="M162 881c0-10 6-15 11-15 7 0 8 6 8 11v4h-13c0 5 8 8 13 4v5c-8 5-19 1-19-9z" fill="#0a72d0"/>
<path d="M209 868h22v22h-22z" fill="#f8d775"/><path d="M209 871h22v4h-22z" fill="#e8b840"/><path d="M214 884h14v8h-5v-4h-4v4h-5z" fill="#3a88d0"/>
<path d="M258 871h20l2 22h-24z" fill="#fff"/><path d="M263 871v-2a5 5 0 0 1 10 0v2" fill="none" stroke="#fff" stroke-width="1.500"/><path d="M263 876h4v4h-4zM269 876h4v4h-4zM263 882h4v4h-4zM269 882h4v4h-4z" fill="#000"/>
<path d="M308 878l8-4 10 3-2 8-9 2-4-5z" fill="#6a6258"/><path d="M320 883l8 6" stroke="#ccc" stroke-width="1.500"/><circle cx="315" cy="880" r="1.500" fill="#fff"/>
<rect x="355" y="868" width="24" height="24" fill="#f8f0e4"/><text x="359" y="888" style="font-size:22px;font-weight:bold;fill:#c87828">R</text>
<circle cx="414" cy="874" r="6" fill="#e0d8d8" stroke="#888"/><path d="M412 880l10 8M421 878l-6 10" stroke="#50a0c8" stroke-width="1.500"/><circle cx="423" cy="890" r="2.200" fill="none" stroke="#50a0c8"/><circle cx="413" cy="889" r="2.200" fill="none" stroke="#50a0c8"/><path d="M408 880l4-9" stroke="#c84040" stroke-width="2"/>
<path d="M453 872l6-5h13v26h-19z" fill="#10a8e0"/><text x="456" y="889" style="font-size:20px;font-weight:bold;fill:#fff">C</text>
<circle cx="514" cy="880" r="10" fill="#fff"/><text x="508.500" y="885" style="font-size:14px;font-weight:bold;fill:#000">#</text>
<rect x="556" y="868" width="15" height="24" fill="#d8e4f4" stroke="#8098c0"/><text x="558" y="884" style="font-size:12px;font-weight:bold;fill:#e07818">A</text><path d="M558 870h10" stroke="#5888c0"/>
<circle cx="612" cy="880" r="11" fill="#1878c8"/><path d="M603 880l14-3 3 3-7 3-4-1" fill="#fff"/>
<rect x="651.500" y="870" width="19" height="22" fill="#fff"/><path d="M654 868v4M661 868v4M668 868v4" stroke="#fff" stroke-width="2"/><g fill="#000"><rect x="654" y="877" width="3" height="3"/><rect x="660" y="877" width="3" height="3"/><rect x="666" y="877" width="3" height="3"/><rect x="654" y="883" width="3" height="3"/><rect x="660" y="883" width="3" height="3"/><rect x="666" y="883" width="3" height="3"/></g>
<rect x="699" y="869" width="22" height="24" fill="#f8eed8" stroke="#c89840"/><path d="M714 869h7v7z" fill="#d8a820"/><path d="M706 876v12M703 882h10l4 5" fill="none" stroke="#a06820" stroke-width="1.500"/>
<path d="M1307 884l6-6 6 6" fill="none" stroke="#fff" stroke-width="1.200"/>
<rect x="1331" y="875" width="13" height="10" fill="none" stroke="#fff"/><rect x="1332" y="876" width="6" height="8" fill="#fff"/>
<path d="M1353 884c-3 0-3-5 1-5 1-4 7-4 8-1 3 0 5 6 1 6z" fill="#fff"/>
<path d="M1378 877h3l3-3v12l-3-3h-3z" fill="none" stroke="#fff"/><path d="M1387 876a6 6 0 0 1 0 8M1389 873a9 9 0 0 1 0 14" fill="none" stroke="#fff"/>
<path d="M1405 885a3 3 0 0 1 3-3M1404 881a7 7 0 0 1 8-5M1404 878a10 10 0 0 1 10-6" fill="none" stroke="#ccc" stroke-dasharray="1.500 .7"/><circle cx="1413" cy="885" r="1.300" fill="#fff"/>
<rect x="1425.500" y="873.500" width="22" height="12" fill="none" stroke="#fff"/><path d="M1428 877h17M1428 880h17M1431 883h11" stroke="#fff" stroke-dasharray="1.500 1"/>
<text x="1460" y="884" textLength="21" lengthAdjust="spacingAndGlyphs" style="fill:#fff">FRA</text>
<text x="1504" y="875" textLength="27" lengthAdjust="spacingAndGlyphs" style="fill:#fff">17:12</text>
<text x="1494" y="893" textLength="47" lengthAdjust="spacingAndGlyphs" style="fill:#fff">06-03-17</text>
<rect x="1559" y="873" width="16" height="13" fill="#fff"/><path d="M1561 876h12M1561 879h12M1561 882h8" stroke="#000"/>
<circle cx="1574" cy="887" r="8.500" fill="#333" stroke="#666"/><text x="1570.500" y="891.500" style="font-size:12px;font-weight:bold;fill:#fff">9</text>
</svg>
</body></html>
